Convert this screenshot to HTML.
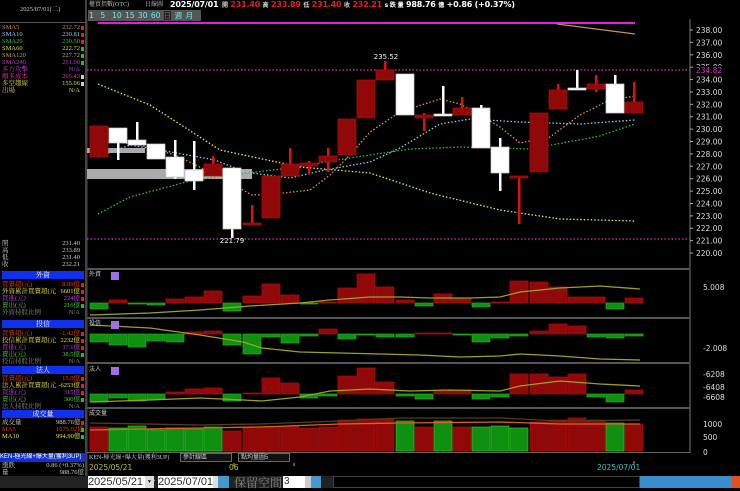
<!DOCTYPE html><html><head><meta charset="utf-8"><style>
*{margin:0;padding:0;box-sizing:border-box}
body{width:740px;height:488px;background:#000;overflow:hidden;position:relative;font-family:"Liberation Sans","Noto Sans CJK TC",sans-serif;}
.t{position:absolute;font-size:6.5px;line-height:8px;white-space:nowrap;font-family:"Liberation Serif","Noto Serif CJK SC",serif}
.r{text-align:right}
.hd{position:absolute;left:2px;width:82px;height:8px;background:#1030f0;color:#fff;font-size:7px;line-height:8px;text-align:center;font-family:"Noto Serif CJK SC",serif}
.dot{position:absolute;left:81px;width:3px;height:4px}
</style></head><body>
<div style="position:absolute;left:0;top:0;width:86px;height:488px;background:#000"></div>
<div style="position:absolute;left:85px;top:0;width:2px;height:488px;background:#444"></div>
<div class="t" style="left:20px;top:6px;color:#ccc">2025/07/01(二)</div>
<div style="position:absolute;left:0;top:22px;width:86px;height:1px;background:#555"></div>
<div id="left"></div>
<div class="t" style="left:89px;top:1px;color:#ccc;font-size:6px">櫃買指數(OTC)</div>
<div class="t" style="left:145px;top:1px;color:#ccc;font-size:6px">日線圖</div>
<div style="position:absolute;left:170px;top:0;font-size:8px;font-weight:bold;color:#fff;font-family:'DejaVu Sans',sans-serif;white-space:nowrap;letter-spacing:-0.2px">2025/07/01</div>
<div style="position:absolute;left:222px;top:0;font-size:8px;font-weight:bold;color:#e02020;font-family:'DejaVu Sans',sans-serif;white-space:nowrap;letter-spacing:-0.2px"><span style="color:#ccc;font-size:6px">開</span> 231.40 <span style="color:#ccc;font-size:6px">高</span> 233.89 <span style="color:#ccc;font-size:6px">低</span> 231.40 <span style="color:#ccc;font-size:6px">收</span> 232.21 <span style="color:#fff;font-size:6px">s 跌 量</span> <span style="color:#fff">988.76 <span style="font-size:6px">億</span> +0.86 (+0.37%)</span></div>
<div style="position:absolute;left:88px;top:10px;width:113px;height:11px;background:#555"></div>
<div style="position:absolute;left:89px;top:10px;font-size:7.5px;line-height:11px;color:#6ee;font-family:'DejaVu Sans',sans-serif;white-space:nowrap;word-spacing:1px">1 &nbsp;5 &nbsp;10 15 30 60 <span style="background:#222;color:#666">日</span> 週 月</div>
<svg id="s" width="740" height="488" style="position:absolute;left:0;top:0" xmlns="http://www.w3.org/2000/svg"></svg>
<div style="position:absolute;left:0;top:453px;width:86px;height:9px;background:#1030d0;color:#fff;font-size:6px;line-height:9px;white-space:nowrap;overflow:hidden">KEN-極光線+爆大量(獲利3UP)</div>
<div class="t" style="left:89px;top:454px;color:#ccc;font-size:6px">KEN-極光線+爆大量(獲利3UP)</div>
<div style="position:absolute;left:180px;top:453px;width:52px;height:9px;background:#111;border:1px solid #666;color:#ccc;font-size:6px;line-height:8px;padding-left:2px">參計線區</div>
<div style="position:absolute;left:238px;top:453px;width:52px;height:9px;background:#111;border:1px solid #666;color:#ccc;font-size:6px;line-height:8px;padding-left:2px">點均量圖5</div>
<div class="t" style="left:89px;top:464px;color:#c0c030;font-size:7.5px;font-family:'DejaVu Sans',sans-serif">2025/05/21</div>
<div class="t" style="left:229px;top:464px;color:#c0c030;font-size:7.5px;font-family:'DejaVu Sans',sans-serif">06</div>
<div class="t" style="left:597px;top:464px;color:#40c0c0;font-size:7.5px;font-family:'DejaVu Sans',sans-serif">2025/07/01</div>
<div class="t" style="left:2px;top:462px;color:#ccc">漲跌</div><div class="t r" style="left:30px;width:54px;top:462px;color:#ccc">0.86 (+0.37%)</div>
<div class="t" style="left:2px;top:469px;color:#ccc">量</div><div class="t r" style="left:30px;width:54px;top:469px;color:#ccc">988.76億</div>
<div style="position:absolute;left:0;top:476px;width:740px;height:12px;background:#222"></div>
<div style="position:absolute;left:88px;top:476px;width:57px;height:12px;background:#fff;color:#333;font-size:11px;line-height:12px">2025/05/21</div>
<div style="position:absolute;left:145px;top:476px;width:9px;height:12px;background:#ddd;font-size:6px;text-align:center;line-height:12px">▾</div>
<div style="position:absolute;left:149px;top:475px;color:#ccc;font-size:11px">~</div>
<div style="position:absolute;left:158px;top:476px;width:55px;height:12px;background:#fff;color:#333;font-size:11px;line-height:12px">2025/07/01</div>
<div style="position:absolute;left:213px;top:476px;width:5px;height:12px;background:#ddd"></div>
<div style="position:absolute;left:218px;top:476px;width:11px;height:12px;background:#49c"></div>
<div style="position:absolute;left:234px;top:474px;color:#888;font-size:12px;font-family:'Noto Serif CJK SC',serif;white-space:nowrap">保留空間</div>
<div style="position:absolute;left:283px;top:476px;width:22px;height:12px;background:#fff;color:#333;font-size:10px;line-height:12px;padding-left:1px">3</div>
<div style="position:absolute;left:305px;top:476px;width:6px;height:12px;background:#ccc"></div>
<div style="position:absolute;left:311px;top:476px;width:10px;height:12px;background:#49c"></div>
<div style="position:absolute;left:333px;top:476px;width:307px;height:12px;background:#000;border:1px solid #444"></div>
<div style="position:absolute;left:640px;top:476px;width:100px;height:12px;background:#3a8ccc"></div>
<div style="position:absolute;left:732px;top:476px;width:8px;height:12px;background:#e05020"></div>
<script>
var L=document.getElementById('left'),h='';
function row(y,a,b,c,d){h+='<div class="t" style="left:2px;top:'+y+'px;color:'+c+'">'+a+'</div><div class="t r" style="left:56px;width:24px;top:'+y+'px;color:'+c+';background:#000">'+b+'</div>';if(d)h+='<div class="dot" style="top:'+(y+2)+'px;background:'+d+'"></div>';}
var R='#e02020',G='#20c020';
row(24,'SMA5','232.72','#d08840',R);row(31,'SMA10','230.81','#90c8e8',R);row(38,'SMA20','230.50','#30c030',R);row(45,'SMA60','222.72','#d8d840',G);row(52,'SMA120','227.72','#c0a060',G);row(59,'SMA240','251.00','#c040c0',G);
row(66,'多方攻擊','N/A','#b040d0');row(73,'順多成本','265.43','#e040a0','#ccc');row(80,'多空趨線','155.06','#d8d840','#ccc');row(87,'出場','N/A','#d8d840');
row(240,'開','231.40','#ccc');row(247,'高','233.89','#ccc');row(254,'低','231.40','#ccc');row(261,'收','232.21','#ccc');
h+='<div class="hd" style="top:271px">外資</div>';
row(281,'買賣超(元)','8.89億','#e04020',R);row(288,'外資累計買賣超(元)','6601億','#e8e040',R);row(295,'買進(元)','224億','#c040e0',R);row(302,'賣出(元)','216億','#40d040',G);row(309,'外資持股比例','N/A','#888');
h+='<div class="hd" style="top:320px">投信</div>';
row(330,'買賣超(元)','-1.42億','#e04020',R);row(337,'投信累計買賣超(元)','2232億','#e8e040',R);row(344,'買進(元)','37.1億','#c040e0',R);row(351,'賣出(元)','38.5億','#40d040',G);row(358,'投信持股比例','N/A','#888');
h+='<div class="hd" style="top:366px">法人</div>';
row(375,'買賣超(元)','15.0億','#e04020',R);row(382,'法人累計買賣超(元)','-6253億','#e8e040',R);row(389,'買進(元)','315億','#c040e0',R);row(396,'賣出(元)','300億','#40d040',G);row(403,'法人持股比例','N/A','#888');
h+='<div class="hd" style="top:410px">成交量</div>';
row(419,'成交量','988.76億','#ccc',R);row(426,'MA5','1075.02億','#e04020',G);row(433,'MA10','994.90億','#e8e040',G);
L.innerHTML=h;
var S=document.getElementById('s'),o='';
function ln(x1,y1,x2,y2,c,w,da){o+='<line x1="'+x1+'" y1="'+y1+'" x2="'+x2+'" y2="'+y2+'" stroke="'+c+'" stroke-width="'+(w||1)+'"'+(da?' stroke-dasharray="'+da+'"':'')+'/>';}
function rc(x,y,w,hh,f,s){o+='<rect x="'+x+'" y="'+y+'" width="'+w+'" height="'+hh+'" fill="'+f+'"'+(s?' stroke="'+s+'" stroke-width="0.7"':'')+'/>';}
function tx(x,y,t,c,sz,a){o+='<text x="'+x+'" y="'+y+'" fill="'+c+'" font-size="'+(sz||7.5)+'" font-family="DejaVu Sans,sans-serif"'+(a?' text-anchor="'+a+'"':'')+'>'+t+'</text>';}
function pl(p,c,da){o+='<polyline points="'+p+'" fill="none" stroke="'+c+'" stroke-width="1.3"'+(da?' stroke-dasharray="'+da+'"':'')+'/>';}
ln(87,19,87,488,'#444',1);ln(690,19,690,453,'#777',1);
rc(87,268,603,2,'#555');rc(87,317,603,2,'#555');rc(87,362,603,2,'#555');rc(87,407,603,2,'#555');rc(87,452,603,1,'#666');
ln(98,23,635,23,'#e020e0',2);ln(557,24,635,34,'#c09060',1.3);
ln(87,70,690,70,'#e030c0',1.3,'1.5 2');ln(87,239,690,239,'#e030c0',1.3,'1.5 2');
rc(87,148,58,5,'#aaa');rc(87,169,165,10,'#aaa');
var y0=30,k=12.39;for(var p=238;p>=220;p--){var y=y0+(238-p)*k;ln(690,y,693,y,'#aaa');tx(696,y+3,p.toFixed(2),'#ddd',7.5);}
rc(694,66,36,8,'#000');tx(696,73,'234.82','#e030c0',7.5);
pl('98,84 150,105 220,150 300,167 370,173 430,193 500,210 560,219 635,221','#e8e840','1.5 2');
pl('98,214 130,197 190,181 230,175 290,168 350,158 410,149 460,147 530,149 600,136 635,124','#30c030','1.5 2');
pl('98,157 130,145 160,150 215,160 245,172 290,178 325,170 370,162 400,148 440,124 470,119 520,122 580,124 635,120','#90c8e8','1.5 2');
pl('98,140 140,145 175,155 210,172 252,195 275,194 310,190 330,175 350,155 370,132 400,112 440,99 460,104 480,115 500,127 520,143 550,137 580,115 610,100 635,96','#e09040','1.5 2');
var C=[[90,126,157,126,157,'r'],[109,128,143,128,160,'w'],[128,140,145,122,145,'w'],[147,144,159,144,159,'w'],[166,157,177,140,179,'w'],[185,170,181,141,190,'w'],[204,164,176,156,176,'r'],[223,168,229,168,238,'w'],[243,223,225,205,225,'r'],[262,176,218,176,218,'r'],[281,164,176,148,176,'r'],[300,163,166,161,174,'r'],[319,156,162,148,172,'r'],[338,119,155,119,155,'r'],[357,80,118,80,118,'r'],[376,70,80,61,80,'r'],[396,74,115,74,115,'w'],[415,115,118,113,131,'r'],[434,114,116,86,116,'w'],[453,108,115,97,115,'r'],[472,108,148,105,148,'w'],[491,147,173,138,191,'w'],[510,176,178,176,224,'r'],[530,113,172,113,172,'r'],[549,90,109,84,109,'r'],[568,88,90,70,90,'w'],[587,84,89,75,92,'r'],[606,84,113,75,113,'w'],[625,102,113,82,113,'r']];
C.forEach(function(c){var cx=c[0]+9,red=c[5]=='r';rc(cx-1,c[3],2.5,c[4]-c[3],red?'#e01010':'#fff');rc(c[0],c[1],18,Math.max(2,c[2]-c[1]),red?'#900808':'#fff',red?'#b01010':'#ccc');});
tx(386,59,'235.52','#eee',7,'middle');tx(232,243,'221.79','#eee',7,'middle');
function bars(base,tops,lineP,lc){tops.forEach(function(t,i){var x=C[i][0];var up=t<base;rc(x,Math.min(t,base),18,Math.max(1,Math.abs(base-t)),up?'#900808':'#109010',up?'#b01010':'#20b020');});pl(lineP,lc||'#a0a020');}
bars(303,[309,300,304,305,299,297,291,311,296,284,295,304,302,288,274,287,300,306,294,299,307,302,281,282,287,297,297,309,298],'90,315 150,313 200,310 250,306 300,303 330,300 370,297 400,297 430,298 470,298 500,297 520,292 560,288 600,286 640,289','#a0a020');
bars(334,[342,345,347,341,342,332,331,345,354,337,343,336,329,339,335,337,337,333,333,335,342,338,336,331,324,326,337,338,336],'90,325 150,328 200,335 243,342 262,348 300,352 340,353 380,354 420,355 460,357 500,356 520,354 560,356 600,359 640,360','#a0a020');
bars(394,[402,398,401,399,392,389,388,401,393,378,383,398,396,376,368,382,396,399,390,390,399,397,374,374,377,374,397,402,390],'90,402 150,400 200,398 243,400 262,401 300,397 330,391 370,389 410,391 450,390 500,391 520,386 560,381 600,384 640,386','#a0a020');
var V=[427,428,426,430,428,429,427,431,427,427,426,428,427,420,419,419,421,427,421,427,427,426,428,422,420,418,420,423,424],VC='rggggggrrrrrrrrrgrgrgggrrrrgr';
V.forEach(function(t,i){var g=VC[i]=='g';rc(C[i][0],t,18,451-t,g?'#109010':'#900808',g?'#30c030':'#b01010');});
pl('90,423 200,425 260,424 340,421 400,418 500,418 560,421 640,420','#504018');pl('90,430 200,428 260,427 340,424 400,423 500,422 560,424 640,424','#e06020');
tx(89,276,'外資','#ccc',6);tx(89,325,'投信','#ccc',6);tx(89,371,'法人','#ccc',6);tx(89,415,'成交量','#ccc',6);
rc(111,272,8,8,'#a070e0');rc(111,321,8,8,'#a070e0');rc(111,367,8,8,'#a070e0');
tx(703,290,'5.008','#ddd',7.5);tx(703,351,'-2.008','#ddd',7.5);tx(703,377,'-6208','#ddd',7.5);tx(703,390,'-6408','#ddd',7.5);tx(703,400,'-6608','#ddd',7.5);
tx(703,427,'1000','#ddd',7.5);tx(703,440,'500','#ddd',7.5);tx(703,455,'0','#ddd',7.5);
ln(294,463,294,466,'#c0c030');ln(234,463,234,466,'#c0c030');ln(634,461,634,465,'#aaa');
S.innerHTML=o;
</script>
</body></html>
